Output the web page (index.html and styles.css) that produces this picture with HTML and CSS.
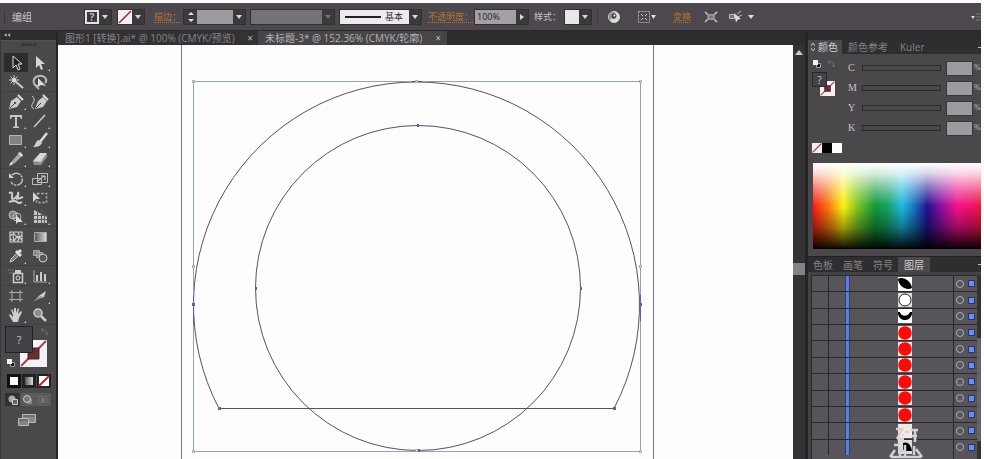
FILE: index.html
```html
<!DOCTYPE html>
<html lang="zh-CN">
<head>
<meta charset="utf-8">
<title>未标题-3</title>
<link rel="stylesheet" href="styles.css">
</head>
<body>
<svg class="defs" aria-hidden="true">
  <symbol id="down" viewBox="0 0 6 4"><path d="M0 0h6L3 4z" fill="currentColor"/></symbol>
  <symbol id="none" viewBox="0 0 14 14"><path d="M0 0h14v14H0z" fill="#f4f0f2"/><path d="M1 13 13 1" stroke="#a02c34" stroke-width="1.6"/></symbol>
  <symbol id="leaf" viewBox="0 0 14 14"><path d="M0 0h14v14H0z" fill="#fff"/><path d="M0 2C5-1 13 4 14 11 9 14 1 10 0 2z" fill="#000"/></symbol>
  <symbol id="ring" viewBox="0 0 14 14"><path d="M0 0h14v14H0z" fill="#ddd"/><circle cx="7" cy="7" r="6" fill="#fff" stroke="#222"/></symbol>
  <symbol id="smile" viewBox="0 0 14 14"><path d="M0 0h14v14H0z" fill="#fff"/><path d="M0 3h2c1 5 8 5 10 0h2v2C12 13 2 13 0 5z" fill="#000"/></symbol>
  <symbol id="red" viewBox="0 0 14 14"><path d="M0 0h14v14H0z" fill="#f3dede"/><circle cx="7" cy="7" r="6.7" fill="#f90b0b"/></symbol>
  <symbol id="pale" viewBox="0 0 14 14"><path d="M0 0h14v14H0z" fill="#f2e8e4"/><path d="M3 5h3M7 8h4M4 11h2" stroke="#d8b8b0"/></symbol>
  <symbol id="quarter" viewBox="0 0 14 14"><path d="M0 0h14v14H0z" fill="#ddd"/><path d="M5 3c4-2 8 1 9 8H5z" fill="#000"/></symbol>
  <symbol id="swap" viewBox="0 0 8 8"><path d="M1 2h4q2 0 2 4M3 0 1 2l2 2M5 5l2 2 1-2" fill="none" stroke="#6d696e"/></symbol>
  <symbol id="default" viewBox="0 0 8 8"><path d="M3 3h5v5H3z" fill="#111"/><path d="M3.500 3.500h4v4h-4z" fill="none" stroke="#aaa"/><path d="M0 0h5v5H0z" fill="#f4f4f4"/></symbol>
  <symbol id="strokebox" viewBox="0 0 27 27"><path d="M0 0h27v27H0z" fill="#f6f1f2"/><path d="M1 26 26 1" stroke="#a5424a" stroke-width="2"/><path d="M8 8h11v11H8z" fill="#6d2b30" stroke="#3a3035"/></symbol>
</svg>

<header class="control-bar">
  <h1 class="object-type">编组</h1>
  <button class="combo fill" aria-label="填色"><span class="question">?</span><span class="arrow"><svg><use href="#down"/></svg></span></button>
  <button class="combo fill" aria-label="描边颜色"><svg class="chip"><use href="#none"/></svg><span class="arrow"><svg><use href="#down"/></svg></span></button>
  <label class="link-label weight-label" for="weight">描边：</label>
  <div class="combo weight">
    <button class="stepper" aria-label="调整粗细"><svg viewBox="0 0 12 14"><path d="M3 5 6 2l3 3zM3 9l3 3 3-3z" fill="#ddd"/></svg></button>
    <input id="weight" type="text">
    <button class="arrow" aria-label="粗细列表"><svg><use href="#down"/></svg></button>
  </div>
  <div class="combo profile">
    <select aria-label="宽度配置" disabled><option></option></select>
    <span class="arrow"><svg><use href="#down"/></svg></span>
  </div>
  <div class="combo brush">
    <svg class="brush-line" viewBox="0 0 40 2"><path d="M0 0h40v2H0z" fill="#222"/></svg>
    <select aria-label="画笔定义"><option>基本</option></select>
    <span class="arrow"><svg><use href="#down"/></svg></span>
  </div>
  <label class="link-label opacity-label" for="opacity">不透明度：</label>
  <div class="combo opacity">
    <input id="opacity" type="text" value="100%">
    <button class="arrow" aria-label="不透明度滑块"><svg viewBox="0 0 6 8"><path d="M1 1v6l4-3z" fill="currentColor"/></svg></button>
  </div>
  <span class="style-label">样式：</span>
  <button class="combo style" aria-label="图形样式"><span class="chip plain"></span><span class="arrow"><svg><use href="#down"/></svg></span></button>
  <button class="icon recolor" aria-label="重新着色"><svg viewBox="0 0 14 14"><circle cx="7" cy="7" r="5.500" fill="#8d8b8e" stroke="#c8c6c8"/><path d="M7 1.500A5.500 5.500 0 0 1 7 12.500Q2 12 4 8q3 3 5-1Q9 3 7 1.500z" fill="#dedede"/><circle cx="7" cy="6" r="2.500" fill="#4a474a"/><circle cx="7.500" cy="5.500" r="1" fill="#eee"/></svg></button>
  <button class="icon align" aria-label="对齐"><svg viewBox="0 0 20 14"><path d="M1.500 1.500h11v11h-11z" fill="none" stroke="#aaa" stroke-dasharray="2 1"/><path d="M4 4l2 2M10 4 8 6M4 10l2-2M10 10 8 8" stroke="#ccc"/><path d="M14 5h5l-2.500 4z" fill="#ddd"/></svg></button>
  <a class="link-label transform" href="#transform">变换</a>
  <button class="icon isolate" aria-label="隔离"><svg viewBox="0 0 14 14"><path d="M3.500 4.500h7v5h-7z" fill="#777" stroke="#ccc"/><path d="M0 1l3 3M14 1l-3 3M0 13l3-3M14 13l-3-3" stroke="#ddd" stroke-width="1.500"/></svg></button>
  <button class="icon similar" aria-label="选择类似对象"><svg viewBox="0 0 26 14"><path d="M1.500 4.500h5v4h-5zM9 4l4-3M10 7l4-2" fill="#777" stroke="#bbb"/><path d="M6 3l7 6-3 .5-2 3z" fill="#ddd"/><path d="M20 5h6l-3 4z" fill="#ddd"/></svg></button>
  <button class="icon bar-menu" aria-label="面板菜单"><svg viewBox="0 0 10 8"><path d="M0 3h4L2 6z" fill="#ddd"/><path d="M5 1h5M5 4h5M5 7h5" stroke="#777"/></svg></button>
</header>

<div class="workspace">
  <aside class="toolbox" aria-label="工具">
    <div class="collapse"><svg viewBox="0 0 8 5"><path d="M3 0v4L0 2zM7 0v4L4 2z" fill="#bbb"/></svg></div>
    <div class="grip"></div>
    <div class="tools">
      <button class="selected" aria-label="选择"><svg viewBox="0 0 18 18"><path d="M6 2v12l3-3 2 5 2-1-2-5h4z" fill="#222" stroke="#ddd"/></svg></button>
      <button class="more" aria-label="直接选择"><svg viewBox="0 0 18 18"><path d="M5 2v12l3-3 2 5 2-1-2-5h4z" fill="#d6d6d6"/></svg></button>
      <button aria-label="魔棒"><svg viewBox="0 0 18 18"><path d="m8 8 8 7" stroke="#ccc" stroke-width="2"/><path d="M7 2v10M2 7h10M3.500 3.500l7 7M10.500 3.500l-7 7" stroke="#ccc"/><circle cx="7" cy="7" r="2" fill="#ddd"/></svg></button>
      <button aria-label="套索"><svg viewBox="0 0 18 18"><path d="M7 13C1 13 1 4 8 3c6-1 9 4 6 7M4 11q1 3 4 5" fill="none" stroke="#bbb" stroke-width="2"/><path d="M7 5v9l3-2 5 1z" fill="#ddd"/></svg></button>
    </div>
    <div class="tools">
      <button class="more" aria-label="钢笔"><svg viewBox="0 0 18 18"><path d="M2 16 4 8l6-4 4 4-4 6z" fill="#ccc"/><path d="m11 2 5 5" stroke="#ddd" stroke-width="2"/><path d="m3 15 5-5" stroke="#444"/><circle cx="8" cy="10" r="1" fill="#333"/></svg></button>
      <button aria-label="曲率"><svg viewBox="0 0 18 18"><path d="m4 16 3-8 5-4 4 4-4 6z" fill="#ccc"/><path d="m12 2 5 5" stroke="#ddd" stroke-width="2"/><path d="m5 15 5-5" stroke="#444"/><path d="M1 3q4 3 1 7t1 6" fill="none" stroke="#ccc"/></svg></button>
      <button class="more" aria-label="文字"><svg viewBox="0 0 18 18"><path d="M3 3h12v4h-1l-1-2h-3v9l2 1v1H6v-1l2-1V5H5L4 7H3z" fill="#c8c6c8"/></svg></button>
      <button class="more" aria-label="直线段"><svg viewBox="0 0 18 18"><path d="M3 15 14 3" stroke="#ccc" stroke-width="1.500"/></svg></button>
      <button class="more" aria-label="矩形"><svg viewBox="0 0 18 18"><path d="M2.500 4.500h12v9h-12z" fill="#848184" stroke="#b5b3b5"/></svg></button>
      <button class="more" aria-label="画笔"><svg viewBox="0 0 18 18"><path d="M16 2 9 11" stroke="#ddd" stroke-width="2.500"/><path d="M8 9l3 3c-2 4-6 4-9 4 3-2 2-6 6-7z" fill="#d0d0d0"/></svg></button>
      <button class="more" aria-label="铅笔"><svg viewBox="0 0 18 18"><path d="m3 15 2-4 7-8 3 3-7 7z" fill="#a9a7a9"/><path d="m11 3 2-1 3 3-1 2z" fill="#ddd"/><path d="m2 16 2-4 2 2z" fill="#eee"/></svg></button>
      <button class="more" aria-label="橡皮擦"><svg viewBox="0 0 18 18"><path d="m2 11 7-8h7l-6 9H2z" fill="#d8d8d8"/><path d="m2 11 8 1v3H3zM10 12l6-9v4l-6 8z" fill="#918f91"/></svg></button>
    </div>
    <div class="tools">
      <button class="more" aria-label="旋转"><svg viewBox="0 0 18 18"><path d="M5 5a6 6 0 1 1-1 7" fill="none" stroke="#c0c0c0" stroke-width="1.500" stroke-dasharray="9 1 2 1"/><path d="M2 3v5h5z" fill="#ccc"/></svg></button>
      <button class="more" aria-label="比例缩放"><svg viewBox="0 0 18 18"><path d="M6.500 3.500h10v9h-10zM1.500 8.500h9v6h-9z" fill="none" stroke="#bbb"/><path d="m7 11 6-5m-3 0h4v4" fill="none" stroke="#ddd"/></svg></button>
      <button class="more" aria-label="宽度"><svg viewBox="0 0 18 18"><path d="M2 4q4-2 3 3-1 5 3 2t3-6q1 4-1 6t6-1M2 13q6-2 8 0t5 0" fill="none" stroke="#ccc" stroke-width="2"/></svg></button>
      <button aria-label="自由变换"><svg viewBox="0 0 18 18"><path d="M6.500 4.500h9v9h-10z" fill="none" stroke="#bbb" stroke-width="1.500" stroke-dasharray="2 2"/><path d="M2 3v10l3-3h4z" fill="#d5d5d5"/></svg></button>
      <button class="more" aria-label="形状生成器"><svg viewBox="0 0 18 18"><circle cx="6" cy="7" r="4" fill="#858285" stroke="#bbb"/><circle cx="10" cy="9" r="4" fill="none" stroke="#bbb"/><path d="M9 7v9l2-2 5 0z" fill="#ddd"/></svg></button>
      <button class="more" aria-label="透视网格"><svg viewBox="0 0 18 18"><path d="M3 2v13h13V9z" fill="#c4c2c4"/><path d="M6.500 2v13M10.500 2v13M13.500 5v11M2 7.500h14M2 11.500h14" stroke="#5b585c"/></svg></button>
    </div>
    <div class="tools">
      <button aria-label="网格"><svg viewBox="0 0 18 18"><path d="M3 4h12v10H3zM3 8q4-4 6 0t6-1M3 11q5 3 6-1t6 2M7 4q-2 5 1 10M11 4q3 5-1 10" fill="#555" stroke="#ccc" stroke-width="1.200"/></svg></button>
      <button aria-label="渐变"><svg viewBox="0 0 18 18"><linearGradient id="g"><stop stop-color="#555"/><stop offset="1" stop-color="#ddd"/></linearGradient><path d="M3.500 4.500h12v9h-12z" fill="url(#g)" stroke="#aaa"/></svg></button>
      <button class="more" aria-label="吸管"><svg viewBox="0 0 18 18"><path d="m3 15 1-3 6-6 2 2-6 6z" fill="#777" stroke="#ccc"/><path d="m9 4 5 5M11 6l3-3" stroke="#ddd" stroke-width="3"/></svg></button>
      <button aria-label="混合"><svg viewBox="0 0 18 18"><path d="M2.500 3.500h6v5h-6zM5.500 5.500h6v5h-6z" fill="#858285" stroke="#aaa"/><circle cx="12" cy="11" r="4" fill="#5a575a" stroke="#ccc"/></svg></button>
    </div>
    <div class="tools">
      <button class="more" aria-label="符号喷枪"><svg viewBox="0 0 18 18"><path d="M6.500 6.500h9v9h-9z" fill="none" stroke="#ccc" stroke-width="1.500"/><path d="M8 3h6v3H8z" fill="#ccc"/><circle cx="11" cy="11" r="2" fill="none" stroke="#ddd"/><path d="M1 3h5M2 6h3" stroke="#888" stroke-dasharray="1 1"/></svg></button>
      <button class="more" aria-label="柱形图"><svg viewBox="0 0 18 18"><path d="M3 3v12h13" fill="none" stroke="#aaa"/><path d="M6 8v6M10 5v9M14 7v7" stroke="#ccc" stroke-width="2"/></svg></button>
    </div>
    <div class="tools">
      <button aria-label="画板"><svg viewBox="0 0 18 18"><path d="M5 3v12M13 3v12M2 5.500h14M2 12.500h14" stroke="#aaa"/></svg></button>
      <button class="more" aria-label="切片"><svg viewBox="0 0 18 18"><path d="m3 14 6-6 6-4-2 6-3 1z" fill="#d0d0d0"/><path d="m3 14 8-5" stroke="#777"/></svg></button>
      <button class="more" aria-label="抓手"><svg viewBox="0 0 18 18"><path d="M6 16 2 9l1-1 3 3V9L4 4l1-1 2 4V2h2v5l2-5 1 1-1 5 3-3 1 1-3 6-1 4z" fill="#d0cfd0"/></svg></button>
      <button aria-label="缩放"><svg viewBox="0 0 18 18"><circle cx="7" cy="7" r="4" fill="#8d8b8e" stroke="#ccc" stroke-width="1.500"/><path d="m10 10 5 5" stroke="#ccc" stroke-width="2.500"/></svg></button>
    </div>
    <div class="paint">
      <button class="paint-fill" aria-label="填色">?</button>
      <svg class="paint-stroke"><use href="#strokebox"/></svg>
      <svg class="paint-swap"><use href="#swap"/></svg>
      <svg class="paint-default"><use href="#default"/></svg>
    </div>
    <div class="modes">
      <button aria-label="颜色"><svg viewBox="0 0 14 14"><path d="M0 0h14v14H0z" fill="#111"/><path d="M3 3h8v8H3z" fill="#fff"/></svg></button>
      <button aria-label="渐变填色"><svg viewBox="0 0 14 14"><path d="M0 0h14v14H0z" fill="#222"/><path d="M3 3h8v8H3z" fill="url(#g)"/></svg></button>
      <button aria-label="无"><svg viewBox="0 0 14 14"><path d="M0 0h14v14H0z" fill="#222"/><path d="M2 2h10v10H2z" fill="#fff"/><path d="M2 12 12 2" stroke="#d01c28" stroke-width="2"/></svg></button>
    </div>
    <div class="draw-modes">
      <button class="selected" aria-label="正常绘图"><svg viewBox="0 0 12 10"><circle cx="5" cy="4" r="3.500" fill="#aaa"/><path d="M5.500 4.500h5v5h-5z" fill="#666" stroke="#ccc"/></svg></button>
      <button aria-label="背面绘图"><svg viewBox="0 0 12 10"><path d="M5 4h5v5H5z" fill="#888"/><circle cx="5" cy="4" r="3.500" fill="#777" stroke="#ccc"/></svg></button>
      <button aria-label="内部绘图"><svg viewBox="0 0 12 10"><path d="M1.500 1.500h8v6h-8z" fill="none" stroke="#777" stroke-dasharray="2 1"/><circle cx="6" cy="5" r="2" fill="#777"/></svg></button>
    </div>
    <button class="screen-mode" aria-label="更改屏幕模式"><svg viewBox="0 0 18 14"><path d="M4.500 1.500h13v8h-13z" fill="#8b898c" stroke="#bbb"/><path d="M5 3h12" stroke="#555"/><path d="M.5 5.500h10v7H.5z" fill="#858386" stroke="#bbb"/><path d="M1 7h9" stroke="#555"/></svg></button>
  </aside>

  <main class="document">
    <nav class="doc-tabs">
      <div class="doc-tab"><a href="#doc1">图形1 [转换].ai* @ 100% (CMYK/预览)</a><button aria-label="关闭图形1">×</button></div>
      <div class="doc-tab current"><a href="#doc2">未标题-3* @ 152.36% (CMYK/轮廓)</a><button aria-label="关闭未标题-3">×</button></div>
    </nav>
    <div class="view">
      <svg class="artboard" viewBox="58 45 735 414" preserveAspectRatio="xMinYMin slice">
        <path d="M181.500 45v414M653.500 45v414" stroke="#77757a"/>
        <path d="M219 408.500A223 223 0 1 1 614 408.500z" fill="none" stroke="#55525c"/>
        <ellipse cx="418" cy="288" rx="162.500" ry="162.500" fill="none" stroke="#55525c"/>
        <path d="M193.500 81.500h447v370h-447z" fill="none" stroke="#8fa6b2"/>
        <path d="M412 81.500h10" stroke="#55525c"/>
        <g fill="#fff" stroke="#8fa6b2"><path d="M192.500 80.500h2v2h-2zM415.500 80.500h2v2h-2zM639.500 80.500h2v2h-2zM192.500 265.500h2v2h-2zM639.500 265.500h2v2h-2zM192.500 450.500h2v2h-2zM415.500 449.500h2v2h-2zM639.500 450.500h2v2h-2z"/></g>
        <g fill="#5b5eb8"><path d="M417 124h2v3h-2zM255 287h2v3h-2zM580 287h2v3h-2zM418 449h2v3h-2zM218 407h3v3h-3zM613 407h3v3h-3zM192 303h3v3h-3zM639 303h3v3h-3z"/></g>
        <path d="M193.500 295v30M640.500 295v26" stroke="#5b63a8"/>
      </svg>
      <div class="scrollbar"><svg viewBox="0 0 8 5"><path d="M0 5h8L4 0z" fill="#ccc"/></svg><span class="thumb"></span></div>
    </div>
  </main>

  <aside class="panels">
    <div class="dock-head"></div>
    <nav class="panel-tabs color-tabs">
      <a class="current" href="#color"><svg viewBox="0 0 4 8"><path d="M0 3l2-3 2 3M0 5l2 3 2-3" fill="none" stroke="#bbb"/></svg>颜色</a><a href="#guide">颜色参考</a><a href="#kuler">Kuler</a>
      <button class="panel-menu" aria-label="颜色面板菜单"></button>
    </nav>
    <section class="color" id="color">
      <div class="mixer">
        <div class="mini-paint">
          <svg class="mini-default"><use href="#default"/></svg><svg class="mini-swap"><use href="#swap"/></svg>
          <button class="mini-fill" aria-label="填色">?</button>
          <svg class="mini-stroke"><use href="#strokebox"/></svg>
        </div>
        <div class="channels">
          <div class="channel"><label for="c">C</label><span class="track"></span><input id="c" type="text"><span>%</span></div>
          <div class="channel"><label for="m">M</label><span class="track"></span><input id="m" type="text"><span>%</span></div>
          <div class="channel"><label for="y">Y</label><span class="track"></span><input id="y" type="text"><span>%</span></div>
          <div class="channel"><label for="k">K</label><span class="track"></span><input id="k" type="text"><span>%</span></div>
        </div>
      </div>
      <div class="quick"><svg><use href="#none"/></svg><span class="black"></span><span class="white"></span></div>
      <div class="spectrum"></div>
    </section>
    <nav class="panel-tabs layer-tabs">
      <a href="#swatches">色板</a><a href="#brushes">画笔</a><a href="#symbols">符号</a><a class="current" href="#layers">图层</a>
      <button class="panel-menu" aria-label="图层面板菜单"></button>
    </nav>
    <section class="layers" id="layers">
      <ul>
        <li><i></i><b></b><svg class="thumbnail"><use href="#leaf"/></svg><span class="target"></span><span class="mark"></span></li>
        <li><i></i><b></b><svg class="thumbnail"><use href="#ring"/></svg><span class="target"></span><span class="mark"></span></li>
        <li><i></i><b></b><svg class="thumbnail"><use href="#smile"/></svg><span class="target"></span><span class="mark"></span></li>
        <li><i></i><b></b><svg class="thumbnail"><use href="#red"/></svg><span class="target"></span><span class="mark"></span></li>
        <li><i></i><b></b><svg class="thumbnail"><use href="#red"/></svg><span class="target"></span><span class="mark"></span></li>
        <li><i></i><b></b><svg class="thumbnail"><use href="#red"/></svg><span class="target"></span><span class="mark"></span></li>
        <li><i></i><b></b><svg class="thumbnail"><use href="#red"/></svg><span class="target"></span><span class="mark"></span></li>
        <li><i></i><b></b><svg class="thumbnail"><use href="#red"/></svg><span class="target"></span><span class="mark"></span></li>
        <li><i></i><b></b><svg class="thumbnail"><use href="#red"/></svg><span class="target"></span><span class="mark"></span></li>
        <li><i></i><b></b><svg class="thumbnail"><use href="#pale"/></svg><span class="target"></span><span class="mark"></span></li>
        <li><i></i><b></b><svg class="thumbnail"><use href="#quarter"/></svg><span class="target"></span><span class="mark"></span></li>
      </ul>
      <div class="layer-scroll"><span></span></div>
      <svg class="stamp" viewBox="0 0 36 32" aria-hidden="true"><path d="M8 2h6M9 12h7M14 2 9 12M23 3h7M24 9h5M27 3v12M12 18v12M17 18v12M12 24h5M6 18h6M7 23l-5 7M26 19v9M28 22l6 8M3 30h30" fill="none" stroke="#d4d2d5" stroke-width="2.500"/></svg>
    </section>
  </aside>
</div>
</body>
</html>
```

FILE: styles.css
```css
* { box-sizing: border-box; }
body {
  margin: 0;
  height: 100vh;
  padding: 3px 3px 0 0;
  display: flex;
  flex-direction: column;
  overflow: hidden;
  background: #fdfcfd;
  color: #c5c3c6;
  font: 10px/14px "Open Sans", "Noto Sans CJK SC", sans-serif;
}
.defs { position: absolute; width: 0; height: 0; }
button, input, select {
  margin: 0; padding: 0; border: 0; border-radius: 0;
  background: none; color: inherit; font: inherit;
  appearance: none; min-width: 0;
}
button { display: flex; align-items: center; justify-content: center; }
a { color: inherit; text-decoration: none; }
svg { display: block; flex: none; }

/* control bar */
.control-bar {
  flex: none;
  height: 28px;
  display: flex;
  align-items: center;
  background: #4c484d;
  border-bottom: 1px solid #2c292d;
  padding-left: 4px;
  white-space: nowrap;
}
.object-type { width: 80px; margin: 0; padding-left: 7px; border-left: 1px solid #3c393d; font-size: 10px; font-weight: 400; }
.combo { display: flex; align-items: center; height: 14px; background: #3c393d; outline: 1px solid #333034; flex: none; }
.arrow { width: 12px; height: 14px; display: flex; align-items: center; justify-content: center; color: #d8d6d8; }
.arrow svg { width: 6px; height: 4px; }
.opacity .arrow svg { height: 8px; }
.fill { width: 26px; margin: 0 6px 0 1px; }
.chip { width: 14px; height: 14px; }
.question { width: 14px; height: 14px; border: 2px solid #e4e2e4; line-height: 10px; font-weight: 700; color: #bbb; }
.plain { background: #e9e7ea; }
.link-label { color: #b8732e; font-size: 9px; text-decoration: underline dotted; text-underline-offset: 2px; }
.weight-label { width: 34px; padding-left: 4px; }
.weight { width: 61px; }
.stepper { width: 13px; }
.stepper svg { width: 12px; height: 14px; }
.weight input { flex: 1; height: 14px; background: #9c9a9e; }
.profile { width: 83px; margin-left: 6px; }
.profile select { flex: 1; height: 14px; background: #757277; opacity: 1; }
.profile .arrow { color: #777; }
.brush { width: 81px; margin-left: 6px; background: linear-gradient(90deg, #eceaed 69px, #3c393d 69px); }
.brush-line { width: 36px; height: 2px; margin-left: 5px; }
.brush select { flex: 1; padding-left: 4px; height: 14px; color: #333; line-height: 14px; font-size: 9px; }
.opacity-label { width: 54px; padding-left: 7px; }
.opacity { width: 53px; }
.opacity input { flex: 1; height: 14px; background: #a3a1a5; color: #222; font-size: 9px; line-height: 14px; padding-left: 2px; }
.style-label { width: 37px; padding-left: 6px; font-size: 9px; }
.style { width: 26px; }
.icon { height: 16px; flex: none; }
.recolor { margin-left: 6px; padding-left: 9px; border-left: 1px solid #3f3c40; }
.recolor svg { width: 14px; height: 14px; }
.align { margin-left: 16px; }
.align svg { width: 20px; height: 14px; }
.transform { margin-left: 16px; }
.isolate { margin-left: 13px; }
.isolate svg { width: 14px; height: 12px; }
.similar { margin-left: 10px; }
.similar svg { width: 26px; height: 14px; }
.bar-menu { margin-left: auto; }
.bar-menu svg { width: 10px; height: 8px; }

.workspace { flex: 1; min-height: 0; display: flex; background: #2f2c30; }

/* toolbox */
.toolbox { width: 58px; flex: none; background: #4b484c; border-left: 1px solid #39363a; border-right: 2px solid #272428; }
.collapse { height: 9px; background: #2f2c30; padding: 2px 3px; }
.collapse svg { width: 7px; height: 5px; }
.grip { height: 13px; display: flex; justify-content: center; border-top: 1px solid #555257; }
.grip::before { content: ""; width: 16px; height: 3px; margin-top: 2px; background: repeating-linear-gradient(90deg, #353236 0 1px, #454246 1px 2px); }
.tools { display: grid; grid-template-columns: 24px 24px; grid-auto-rows: 19px; padding-left: 3px; border-bottom: 1px solid #434044; }
.tools button { position: relative; }
.tools svg { width: 18px; height: 18px; }
.tools .selected { background: #2f2c30; }
.more::after { content: ""; position: absolute; right: 2px; bottom: 1px; border: 1px solid #ccc; border-left-color: transparent; border-top-color: transparent; }
.paint { position: relative; height: 49px; }
.paint-fill { position: absolute; left: 4px; top: 1px; width: 28px; height: 27px; background: #454247; border: 1px solid #242125; z-index: 1; font-size: 11px; }
.paint-stroke { position: absolute; left: 19px; top: 15px; width: 27px; height: 27px; }
.paint-swap { position: absolute; left: 39px; top: 3px; width: 8px; height: 8px; }
.paint-default { position: absolute; left: 6px; top: 34px; width: 8px; height: 8px; }
.modes { display: flex; gap: 1px; padding-left: 6px; }
.modes svg { width: 14px; height: 14px; }
.draw-modes { display: flex; margin: 5px 5px 0 4px; background: #5c595d; }
.draw-modes button { flex: 1; height: 13px; }
.draw-modes svg { width: 12px; height: 10px; }
.draw-modes .selected { background: #323034; }
.screen-mode { margin: 7px 0 0 17px; }
.screen-mode svg { width: 18px; height: 14px; }

/* document */
.document { flex: 1; min-width: 0; display: flex; flex-direction: column; }
.doc-tabs { height: 14px; flex: none; display: flex; white-space: nowrap; }
.doc-tab { display: flex; align-items: center; justify-content: space-between; width: 200px; padding: 0 3px 0 7px; color: #858287; background: #343135; }
.doc-tab.current { width: 189px; padding-right: 4px; background: #484549; color: #b5b3b6; }
.doc-tab button { width: 10px; height: 14px; color: #bbb; }
.view { flex: 1; min-height: 0; display: flex; }
.artboard { flex: 1; min-width: 0; height: 100%; background: #fefdfe; }
.scrollbar { width: 12px; flex: none; background: #363337; display: flex; flex-direction: column; align-items: center; padding-top: 5px; }
.scrollbar svg { width: 8px; height: 5px; }
.thumb { width: 12px; height: 12px; margin-top: 208px; background: #858287; }

/* panels */
.panels { width: 176px; flex: none; display: flex; flex-direction: column; background: #4b484c; border-left: 3px solid #272428; }
.dock-head { height: 9px; flex: none; background: #2f2c30; }
.panel-tabs { flex: none; height: 14px; display: flex; background: #302d31; color: #858287; font-size: 10px; line-height: 14px; white-space: nowrap; }
.panel-tabs a { display: flex; align-items: center; }
.panel-tabs .current { background: #4b484c; color: #d0ced1; }
.panel-menu { margin-left: auto; width: 3px; }
.panel-menu::before { content: ""; width: 3px; height: 1px; background: #bbb; }
.color-tabs a { padding: 0 6px; }
.color-tabs .current { padding: 0 4px 0 3px; gap: 3px; }
.color-tabs svg { width: 4px; height: 8px; }
.layer-tabs { border-top: 1px solid #242125; height: 16px; }
.layer-tabs a { padding: 0 5px; }
.layer-tabs .current { padding: 0 6px; }
.color { height: 202px; flex: none; padding: 4px 0 0 4px; }
.mixer { display: flex; }
.mini-paint { position: relative; width: 36px; flex: none; }
.mini-default, .mini-swap { position: absolute; left: 1px; top: 2px; width: 8px; height: 8px; }
.mini-swap { left: 15px; }
.mini-fill { position: absolute; left: 0; top: 14px; width: 15px; height: 15px; background: #454247; border: 1px solid #2c292d; z-index: 1; }
.mini-stroke { position: absolute; left: 8px; top: 23px; width: 15px; height: 15px; }
.channels { flex: 1; }
.channel { display: flex; align-items: center; height: 20px; font-family: "Liberation Serif", serif; font-size: 10px; }
.channel label { width: 14px; }
.track { flex: 1; height: 6px; border: 1px solid #2c292d; }
.channel input { width: 27px; height: 15px; margin: 0 1px 0 5px; background: #9c9a9e; border: 1px solid #39363a; }
.channel span:last-child { width: 7px; font-size: 8px; }
.quick { display: flex; margin-top: 5px; }
.quick svg, .quick span { width: 10px; height: 10px; }
.black { background: #000; }
.white { background: #fff; }
.spectrum {
  height: 86px;
  margin: 10px 0 0 1px;
  background:
    linear-gradient(180deg, #fff 0, rgba(255,255,255,.82) 12%, rgba(255,255,255,.4) 30%, rgba(255,255,255,0) 50%, rgba(0,0,0,0) 52%, rgba(0,0,0,.35) 75%, rgba(0,0,0,.88) 97%, #000 100%),
    linear-gradient(90deg, #f01c18 0, #fb7410 9%, #f8f010 18%, #78c020 27%, #129838 37%, #14a060 44%, #20b8dc 53%, #1478c0 60%, #201090 68%, #90109c 77%, #f4108c 86%, #f0106c 94%, #e81838 100%);
}
.layers { position: relative; flex: 1; min-height: 0; display: flex; padding: 3px 0 0 3px; background: #454246; }
.layers ul { flex: 1; margin: 0; padding: 0 0 4px; list-style: none; display: flex; flex-direction: column; background: #58555a; border-left: 1px solid #2c292d; }
.layers li { flex: 1; display: flex; align-items: center; border-top: 1px solid #2c292d; }
.layers i { width: 17px; align-self: stretch; border-right: 1px solid #2c292d; }
.layers b { width: 5px; margin: 0 48px 0 16px; align-self: stretch; background: #5a80dc; border: 1px solid #303f78; border-width: 0 1px; }
.thumbnail { width: 14px; height: 14px; }
.thumbnail + .target { box-shadow: none; }
.target { width: 8px; height: 8px; margin-left: auto; border: 1px solid #b0aeb0; border-radius: 50%; background: #58555a; }
.mark { width: 7px; height: 7px; margin: 0 2px 0 4px; background: #6890ec; border: 1px solid #253572; }
.layers ul { background: linear-gradient(90deg, transparent 141px, #2c292d 141px 142px, transparent 142px), #58555a; }
.layer-scroll { width: 4px; background: #343135; padding-top: 63px; }
.layer-scroll span { display: block; height: 103px; background: #656267; }
.stamp { position: absolute; left: 80px; bottom: 0; width: 36px; height: 32px; }
```
